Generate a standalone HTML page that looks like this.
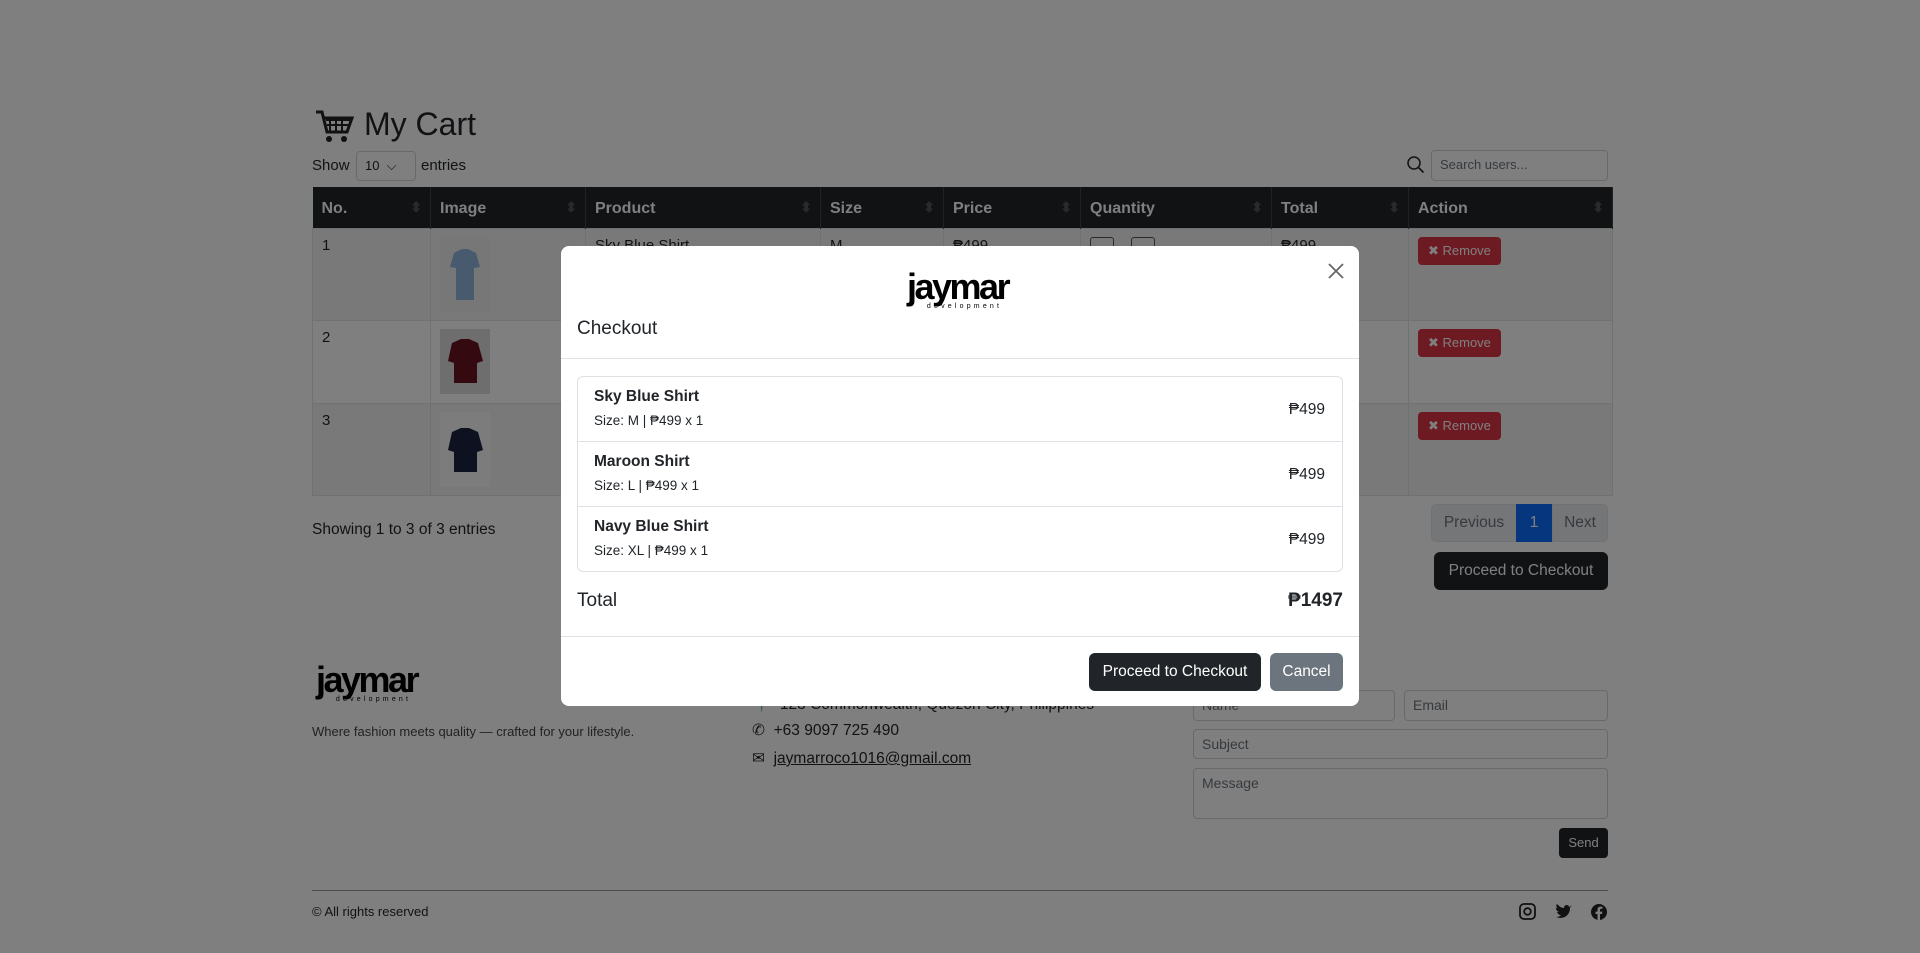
<!DOCTYPE html>
<html><head><meta charset="utf-8">
<style>
*{box-sizing:border-box;margin:0;padding:0}
body{width:1920px;height:953px;overflow:hidden;background:#fff;font-family:"Liberation Sans",sans-serif;color:#212529;font-size:16px;position:relative}
.abs{position:absolute}
.logo{position:absolute;text-align:center;line-height:1}
.logo b{display:block;font-size:36px;letter-spacing:-2.5px;font-weight:bold;color:#000}
.logo i{display:block;font-style:normal;font-size:7px;letter-spacing:3.2px;color:#000;margin-top:-2px;padding-left:14px}
table{border-collapse:collapse;position:absolute;left:312px;top:187px;width:1301px;table-layout:fixed}
th{background:#212529;color:#fff;text-align:left;height:41px;padding:3px 9px 0;font-size:16px;border-right:1px solid #444;position:relative}
th:after{content:"⬍";position:absolute;right:8px;top:12px;color:#555;font-size:14px}
td{vertical-align:top;padding:8px 9px;border:1px solid #dee2e6;font-size:15px;overflow:hidden}
td svg{display:block}
tr.s td{background:#f2f2f2}
.rm{display:inline-block;background:#dc3545;color:#fff;font-size:13px;padding:6px 10px;border-radius:4px}
.inp{position:absolute;border:1px solid #ced4da;border-radius:4px;background:#fff;font-size:14px;color:#6c757d;padding:6px 8px}
.overlay{position:absolute;left:0;top:0;width:1920px;height:953px;background:rgba(0,0,0,.5)}
.modal{position:absolute;left:561px;top:246px;width:798px;height:460px;background:#fff;border-radius:8px}
.item{height:65px;border-bottom:1px solid #dee2e6;padding:11px 16px;position:relative}
.item b{display:block;font-size:15.5px;margin-bottom:6px}
.item small{font-size:13.5px}
.item span{position:absolute;right:17px;top:24px;font-size:15.5px}
.btn{position:absolute;border-radius:6px;color:#fff;font-size:15.5px;text-align:center}
</style></head><body>

<svg class="abs" style="left:314px;top:108px" width="40" height="36" viewBox="0 0 40 36"><path d="M2 4h6l5 20h20l5-14H10" fill="none" stroke="#222" stroke-width="3"/><path d="M12 12h24M13 17h21M16 10v14M22 10v14M28 10v14" stroke="#222" stroke-width="2"/><circle cx="15" cy="31" r="3" fill="#222"/><circle cx="30" cy="31" r="3" fill="#222"/></svg>
<div class="abs" style="left:364px;top:106px;font-size:32px;font-weight:500">My Cart</div>
<div class="abs" style="left:312px;top:157px;font-size:15px">Show</div>
<div class="inp" style="left:356px;top:151px;width:60px;height:30px;color:#212529;font-size:13px;padding:6px 8px">10 &nbsp;⌵</div>
<div class="abs" style="left:421px;top:157px;font-size:15px">entries</div>
<svg class="abs" style="left:1406px;top:155px" width="20" height="20"><circle cx="8" cy="8" r="6" fill="none" stroke="#222" stroke-width="1.5"/><path d="M12.5 12.5l5 5" stroke="#222" stroke-width="1.6"/></svg>
<div class="inp" style="left:1431px;top:150px;width:177px;height:31px;font-size:13px">Search users...</div>

<table>
<tr><th style="width:118px">No.</th><th style="width:155px">Image</th><th style="width:235px">Product</th><th style="width:123px">Size</th><th style="width:137px">Price</th><th style="width:191px">Quantity</th><th style="width:137px">Total</th><th>Action</th></tr>
<tr class="s"><td style="height:92px">1</td><td><svg width="50" height="75"><rect width="50" height="75" fill="#eee"/><path d="M14 16l8-4h6l8 4 4 14-6 1v32H16V31l-6-1z" fill="#8fb4dd"/></svg></td><td>Sky Blue Shirt</td><td>M</td><td>₱499</td><td><span style="display:inline-block;width:24px;height:22px;border:1px solid #555;border-radius:3px"></span> 1 <span style="display:inline-block;width:24px;height:22px;border:1px solid #555;border-radius:3px"></span></td><td>₱499</td><td><span class="rm">✖ Remove</span></td></tr>
<tr><td style="height:83px">2</td><td><svg width="50" height="65"><rect width="50" height="65" fill="#ddd"/><path d="M12 14l9-4h8l9 4 5 18-6 2v20H14V34l-6-2z" fill="#6a1320"/></svg></td><td>Maroon Shirt</td><td>L</td><td>₱499</td><td></td><td>₱499</td><td><span class="rm">✖ Remove</span></td></tr>
<tr class="s"><td style="height:92px">3</td><td><svg width="50" height="75"><rect width="50" height="75" fill="#f8f8f8"/><path d="M12 20l9-4h8l9 4 5 18-6 2v20H14V40l-6-2z" fill="#1a2240"/></svg></td><td>Navy Blue Shirt</td><td>XL</td><td>₱499</td><td></td><td>₱499</td><td><span class="rm">✖ Remove</span></td></tr>
</table>

<div class="abs" style="left:312px;top:521px;font-size:15.5px">Showing 1 to 3 of 3 entries</div>
<div class="abs" style="left:1431px;top:504px;width:86px;height:38px;background:#e9ecef;border:1px solid #dee2e6;border-radius:5px 0 0 5px;color:#6c757d;text-align:center;line-height:36px;font-size:15.5px">Previous</div>
<div class="abs" style="left:1516px;top:504px;width:36px;height:38px;background:#0d6efd;color:#fff;text-align:center;line-height:38px;font-size:15.5px">1</div>
<div class="abs" style="left:1552px;top:504px;width:56px;height:38px;background:#e9ecef;border:1px solid #dee2e6;border-radius:0 5px 5px 0;color:#6c757d;text-align:center;line-height:36px;font-size:15.5px">Next</div>
<div class="btn" style="left:1434px;top:552px;width:174px;height:38px;background:#212529;line-height:38px">Proceed to Checkout</div>

<div class="logo" style="left:316px;top:662px"><b>jaymar</b><i>development</i></div>
<div class="abs" style="left:312px;top:724px;font-size:13px;color:#444">Where fashion meets quality — crafted for your lifestyle.</div>
<div class="abs" style="left:752px;top:695px;font-size:15.5px">📍&nbsp; 123 Commonwealth, Quezon City, Philippines</div>
<div class="abs" style="left:752px;top:721px;font-size:15.5px">✆&nbsp; +63 9097 725 490</div>
<div class="abs" style="left:752px;top:749px;font-size:15.5px">✉&nbsp; <u>jaymarroco1016@gmail.com</u></div>
<div class="inp" style="left:1193px;top:690px;width:202px;height:31px">Name</div>
<div class="inp" style="left:1404px;top:690px;width:204px;height:31px">Email</div>
<div class="inp" style="left:1193px;top:729px;width:415px;height:30px">Subject</div>
<div class="inp" style="left:1193px;top:768px;width:415px;height:51px">Message</div>
<div class="btn" style="left:1559px;top:828px;width:49px;height:30px;background:#212529;line-height:30px;font-size:13px;border-radius:4px">Send</div>
<div class="abs" style="left:312px;top:890px;width:1296px;height:1px;background:#999"></div>
<div class="abs" style="left:312px;top:904px;font-size:13px">© All rights reserved</div>
<svg class="abs" style="left:1519px;top:903px" width="92" height="18"><rect x="1" y="1" width="15" height="15" rx="4" fill="none" stroke="#222" stroke-width="1.8"/><circle cx="8.5" cy="8.5" r="3.3" fill="none" stroke="#222" stroke-width="1.8"/><g transform="translate(11 0)"><path d="M38 4c2 0 3-1 4-2-1 2-2 2-2 3 0 7-6 12-14 9 3 0 4-1 5-2-2 0-3-1-4-3h2c-2-1-3-2-3-4 1 0 1 0 2 1-2-2-2-4-1-5 2 2 4 4 7 4 0-3 3-4 5-2 1 0 2-1 2-1z" fill="#222"/></g><circle cx="80" cy="9" r="8" fill="#222"/><path d="M81 17v-6h2l.4-2.4H81V7c0-.7.3-1.2 1.3-1.2h1.2V3.7c-.5 0-1.2-.1-2-.1-2 0-3 1.1-3 3.1v1.9h-2V11h2v6z" fill="#fff"/></svg>

<div class="overlay"></div>

<div class="modal">
  <div class="logo" style="left:346px;top:23px"><b>jaymar</b><i>development</i></div>
  <svg class="abs" style="left:766px;top:16px" width="18" height="18"><path d="M2 2l14 14M16 2L2 16" stroke="#666" stroke-width="1.8"/></svg>
  <div class="abs" style="left:16px;top:72px;font-size:19px;font-weight:500">Checkout</div>
  <div class="abs" style="left:0;top:112px;width:798px;height:1px;background:#dee2e6"></div>
  <div class="abs" style="left:16px;top:130px;width:766px;height:196px;border:1px solid #dee2e6;border-radius:6px;overflow:hidden">
    <div class="item"><b>Sky Blue Shirt</b><small>Size: M | ₱499 x 1</small><span>₱499</span></div>
    <div class="item"><b>Maroon Shirt</b><small>Size: L | ₱499 x 1</small><span>₱499</span></div>
    <div class="item" style="border-bottom:none"><b>Navy Blue Shirt</b><small>Size: XL | ₱499 x 1</small><span>₱499</span></div>
  </div>
  <div class="abs" style="left:16px;top:344px;font-size:19px;font-weight:500">Total</div>
  <div class="abs" style="right:16px;top:344px;font-size:19px;font-weight:bold">₱1497</div>
  <div class="abs" style="left:0;top:390px;width:798px;height:1px;background:#dee2e6"></div>
  <div class="btn" style="left:528px;top:407px;width:172px;height:38px;background:#212529;line-height:38px">Proceed to Checkout</div>
  <div class="btn" style="left:709px;top:407px;width:73px;height:38px;background:#6c757d;line-height:38px">Cancel</div>
</div>
</body></html>
